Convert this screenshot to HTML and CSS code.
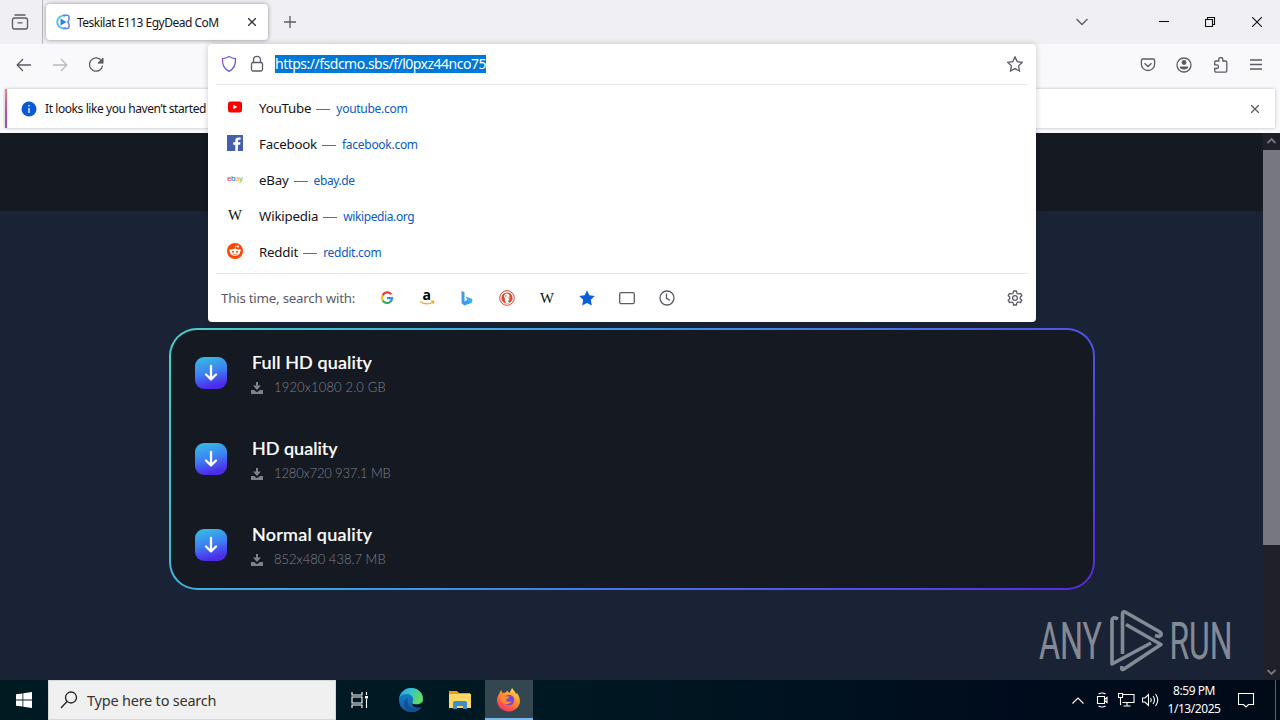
FILE: index.html
```html
<!DOCTYPE html>
<html lang="en">
<head>
<meta charset="utf-8">
<title>Teskilat E113 EgyDead CoM</title>
<link rel="stylesheet" href="styles.css">
</head>
<body>
<svg class="defs" aria-hidden="true">
  <defs>
    <linearGradient id="tile" x1="0" y1="0" x2=".25" y2="1"><stop offset="0" stop-color="#35c2dd"/><stop offset=".55" stop-color="#3d80f5"/><stop offset="1" stop-color="#4c2bea"/></linearGradient>
    <linearGradient id="shieldg" x1="0" y1="0" x2="1" y2="1"><stop offset="0" stop-color="#9059d8"/><stop offset="1" stop-color="#4a5bc8"/></linearGradient>
    <symbol id="tray" viewBox="0 0 12 12"><path d="M5 0h2v3.500h3L6 8 2 3.500h3zM0 8h3L6 10.200 9 8h3v4H0z" fill="#80828a"/></symbol>
    <symbol id="tileicon" viewBox="0 0 32 32"><rect width="32" height="32" rx="9" fill="url(#tile)"/><path d="M16 9v13M11 17.500l5 4.800 5-4.800" fill="none" stroke="#fff" stroke-width="2.300" stroke-linecap="round" stroke-linejoin="round"/></symbol>
  </defs>
</svg>
<div class="desktop">
  <header class="tabbar">
    <div class="tabview"><svg width="18" height="18" viewBox="0 0 18 18" class="line"><path d="M3.500 2h11M1.500 7q0-2 2-2h11q2 0 2 2v7q0 2-2 2h-11q-2 0-2-2zM6.500 9.800h5"/></svg></div>
    <div class="tab">
      <svg width="16" height="16" viewBox="0 0 16 16"><path d="M10.500 2A6.300 6.300 0 1 0 11 13.800" fill="none" stroke="#55bde9" stroke-width="1.900"/><path d="M8 1.300h4q2 0 2 2v2q0 1.500-1.300 2.700Q14 9.200 14 10.500v2q0 2-2 2H8" fill="none" stroke="#6482df" stroke-width="1.500"/><path d="M5.500 4.500l6 3.500-6 3.500z" fill="#317fe8"/></svg>
      <span class="tabtitle">Teskilat E113 EgyDead CoM</span>
      <svg class="tabclose line" width="8" height="8" viewBox="0 0 8 8"><path d="M0 0l8 8M8 0L0 8"/></svg>
    </div>
    <svg class="newtab line" width="12" height="12" viewBox="0 0 12 12"><path d="M6 0v12M0 6h12"/></svg>
    <div class="winctl">
      <svg width="12" height="8" viewBox="0 0 12 8" class="line chev"><path d="M.5 1L6 6.500 11.500 1"/></svg>
      <svg width="10" height="10" viewBox="0 0 10 10" class="win"><path d="M0 4.500h10"/></svg>
      <svg width="11" height="11" viewBox="0 0 11 11" class="win"><path d="M.5 2.500h7v7h-7zM2.500 2.500v-2h7v7h-2"/></svg>
      <svg width="10" height="10" viewBox="0 0 10 10" class="win"><path d="M0 0l10 10M10 0L0 10"/></svg>
    </div>
  </header>

  <nav class="toolbar">
    <svg class="line" width="16" height="16" viewBox="0 0 16 16"><path d="M15 8H1.500M7 2L1.200 8 7 14"/></svg>
    <svg class="line faded" width="16" height="16" viewBox="0 0 16 16"><path d="M1 8h13.500M9 2l5.800 6L9 14"/></svg>
    <svg class="line" width="16" height="16" viewBox="0 0 16 16"><path d="M13.500 3.800A6.600 6.600 0 1 0 14.600 8.500M14.800 1v4.800H10"/><path d="M14.500 2v3.500H11z" fill="#5b5b66"/></svg>
    <div class="tools">
      <svg class="line" width="16" height="16" viewBox="0 0 16 16"><path d="M1.400 3.500q0-1.500 1.500-1.500h10.200q1.500 0 1.500 1.500v3.700a6.600 6.300 0 0 1-13.200 0zM4.500 6.300L8 9.500l3.500-3.200"/></svg>
      <svg class="line" width="16" height="16" viewBox="0 0 16 16"><circle cx="8" cy="8" r="7"/><circle cx="8" cy="5.500" r="2.400" fill="#5b5b66" stroke="none"/><path d="M3.800 9.500h8.400q0 3-4.200 3t-4.200-3z" fill="#5b5b66" stroke="none"/></svg>
      <svg class="line" width="16" height="16" viewBox="0 0 16 16"><path d="M5.800 4V2.500a2 2 0 0 1 4 0V4H12.500q1.300 0 1.300 1.300v8.500q0 1.300-1.300 1.300H3q-1.300 0-1.300-1.300V11.500h2a1.800 1.800 0 0 0 0-3.600H1.700V5.300Q1.700 4 3 4z"/></svg>
      <svg class="line" width="14" height="16" viewBox="0 0 14 16"><path d="M1 3h12M1 7.500h12M1 12h12"/></svg>
    </div>
  </nav>

  <div class="noticewrap">
    <div class="notice">
      <svg width="16" height="16" viewBox="0 0 16 16"><circle cx="8" cy="8" r="7.500" fill="#0a5ad6"/><path d="M8 7v5M8 4v1.500" stroke="#fff" stroke-width="1.300"/></svg>
      <span class="noticetext">It looks like you haven’t started</span>
      <svg class="noticeclose line" width="8" height="8" viewBox="0 0 8 8"><path d="M0 0l8 8M8 0L0 8"/></svg>
    </div>
  </div>

  <main class="viewport">
    <div class="site">
      <div class="sitehead"></div>
      <section class="card">
        <div class="item"><svg class="tileicon"><use href="#tileicon"/></svg><div><h2 class="q1">Full HD quality</h2><p><svg class="tray"><use href="#tray"/></svg><span class="s1">1920x1080 2.0 GB</span></p></div></div>
        <div class="item"><svg class="tileicon"><use href="#tileicon"/></svg><div><h2 class="q2">HD quality</h2><p><svg class="tray"><use href="#tray"/></svg><span class="s2">1280x720 937.1 MB</span></p></div></div>
        <div class="item"><svg class="tileicon"><use href="#tileicon"/></svg><div><h2 class="q3">Normal quality</h2><p><svg class="tray"><use href="#tray"/></svg><span class="s3">852x480 438.7 MB</span></p></div></div>
      </section>
    </div>
    <div class="scroll">
      <svg width="9" height="6" viewBox="0 0 9 6"><path d="M.5 5l4-4 4 4"/></svg>
      <div class="thumb"></div>
      <svg width="9" height="6" viewBox="0 0 9 6"><path d="M.5 1l4 4 4-4"/></svg>
    </div>
  </main>

  <footer class="taskbar">
    <div class="start"><svg width="16" height="16" viewBox="0 0 16 16"><path d="M0 2.300L6.500 1.400V7.500H0zM7.300 1.200L16 0v7.500H7.300zM0 8.400h6.500v6.200L0 13.700zM7.300 8.400H16V16l-8.700-1.200z" fill="#fff"/></svg></div>
    <div class="search">
      <svg width="18" height="18" viewBox="0 0 18 18"><circle cx="11" cy="6.500" r="5.500"/><path d="M7 10.500L1 17"/></svg>
      <span class="searchtext">Type here to search</span>
    </div>
    <div class="app"><svg width="18" height="16" viewBox="0 0 18 16" fill="none" stroke="#fff" stroke-width="1.100"><path d="M1 0v3h10V0M1 16v-3h10v3M1 5h10v6H1zM15.500 0v3M15.500 7v9"/><path d="M14 4h3v2.500h-3z" fill="#fff" stroke="none"/></svg></div>
    <div class="app edge"><svg width="26" height="26" viewBox="0 0 26 26">
      <defs><linearGradient id="e1" x1="0" y1="0" x2="1" y2=".35"><stop offset="0" stop-color="#249fd5"/><stop offset=".5" stop-color="#35c4c8"/><stop offset="1" stop-color="#63da62"/></linearGradient><linearGradient id="e2" x1="0" y1="0" x2="0" y2="1"><stop offset="0" stop-color="#1688ce"/><stop offset="1" stop-color="#1059a8"/></linearGradient></defs>
      <circle cx="13" cy="13" r="12" fill="url(#e2)"/><path d="M1.200 11C3 4 8 1 13 1c7 0 12 5 12 10.500 0 4-3 6-6.500 6-3 0-4.700-1-4.300-2 .7-1 1-1.700 1-2.800C15.200 9 12 7 8.500 7 5 7 2.500 8.500 1.200 11z" fill="url(#e1)"/><path d="M10 11c-2 5 1 10 7 10.500 3 .2 5-.8 7-2-2 4-6 5.700-10 5.500C7 24.500 5 18 6.500 14.500 7.500 12.500 9 11.500 10 11z" fill="#174e91"/><path d="M14.200 15.500c-.4 1 1.300 2 4.300 2 2.500 0 4.700-1 5.800-2.500l1.700 3-2.500 2c-4.500 1.500-9.800.5-9.300-4.500z" fill="#001820"/></svg></div>
    <div class="app"><svg width="22" height="20" viewBox="0 0 22 20"><path d="M0 1h8l2 2h11v4H0z" fill="#e9a018"/><path d="M0 4h22v14H0z" fill="#ffd866"/><path d="M4 19v-6q0-2 2-2h10q2 0 2 2v6h-4v-3H8v3z" fill="#3b90c8"/></svg></div>
    <div class="app active"><svg width="24" height="25" viewBox="0 0 24 25">
      <defs><linearGradient id="f1" x1=".8" y1="0" x2=".2" y2="1"><stop offset="0" stop-color="#ffe64a"/><stop offset=".45" stop-color="#ff8b2a"/><stop offset="1" stop-color="#f52b62"/></linearGradient></defs>
      <path d="M2 7l2-4 1.500 3L9 5.500l1-2L12.500 6 15 1c1 2 3 3 4 6l1-1c3 4 4 9 1.500 13S15 24.500 12 24.500C5 24.500 0 19.500 0 13c0-2 .8-4 2-6z" fill="url(#f1)"/><circle cx="12" cy="13" r="5.300" fill="#7b48dc"/><path d="M3 8.500c3-1.500 5-.5 6 .8l3.500.2c-.5 2-3 2-3.500 3 0 2.500 3 3 5.500 1.500-1 3.500-6 4-8.500 1.500C4.500 14 4 12 3 8.500z" fill="#ff8a2c"/></svg></div>
    <div class="systray">
      <svg class="up" width="12" height="7" viewBox="0 0 12 7"><path d="M.5 6.500L6 1l5.500 5.500"/></svg>
      <svg class="cam" width="14" height="16" viewBox="0 0 14 16"><path d="M2.500 4.500h7v7h-7zM9.500 7.500l2.500-2v5l-2.500-2M3.500 2q3.500-2 7 0M3.500 14q3.500 2 7 0"/></svg>
      <svg class="net" width="17" height="14" viewBox="0 0 17 14"><path d="M5 1.500h11v8H4.500M9 9.500V13M5.500 13h7M.5.500h4v4h-4zM2.500 4.500V12"/></svg>
      <svg class="vol" width="17" height="14" viewBox="0 0 17 14"><path d="M.5 5h2.500L6.500 1.500v11L3 9H.5zM8.500 5q1.500 2 0 4M11 3q3 4 0 8M13.500 1q4.500 6 0 12"/></svg>
      <div class="clock"><span class="time">8:59 PM</span><span class="date">1/13/2025</span></div>
      <svg class="action" width="17" height="17" viewBox="0 0 17 17"><path d="M.5 1.500h15v11h-5L8 15l-2.500-2.500h-5z"/></svg>
      <i class="peek"></i>
    </div>
  </footer>

  <div class="urlpanel">
    <div class="urlrow">
      <svg width="16" height="18" viewBox="0 0 16 18"><path d="M8 1.500c2 1.300 4 2 6.500 2.200.3 5-1 9.800-6.500 12.600C2.500 13.500 1.200 8.700 1.500 3.700 4 3.500 6 2.800 8 1.500z" fill="none" stroke="url(#shieldg)" stroke-width="1.300"/></svg>
      <svg class="line" width="14" height="18" viewBox="0 0 14 18"><rect x="1.500" y="7.500" width="11" height="8.500" rx="1.500"/><path d="M3.500 7.500V4.800a3.500 3.500 0 0 1 7 0v2.700"/></svg>
      <span class="url">https://fsdcmo.sbs/f/l0pxz44nco75</span>
      <svg class="line fav" width="16" height="16" viewBox="0 0 16 16"><path d="M8 .9l2.200 4.700 5 .7-3.600 3.600.9 5.100L8 12.600 3.500 15l.9-5.100L.8 6.300l5-.7z"/></svg>
    </div>
    <ul class="suggest">
      <li><svg width="16" height="16" viewBox="0 0 16 16"><rect x="1" y="2.500" width="14" height="11" rx="2.500" fill="#f00"/><path d="M6.300 5.700l4 2.300-4 2.300z" fill="#fff"/></svg><b>YouTube</b><i></i><span>youtube.com</span></li>
      <li><svg width="16" height="16" viewBox="0 0 16 16"><path d="M0 0h16v16H0z" fill="#4460a8"/><path d="M8.300 16V9.800H6.200V7.300h2.100V5.600q0-3.100 3-3.100h2.300v2.300h-1.500q-1.200 0-1.200 1.200v1.300h2.600l-.4 2.500h-2.200V16z" fill="#fff"/></svg><b>Facebook</b><i></i><span>facebook.com</span></li>
      <li><svg width="16" height="16" viewBox="0 0 16 16" class="ebay"><text x="0" y="10" textLength="16"><tspan fill="#e53238">e</tspan><tspan fill="#2d62bd">b</tspan><tspan fill="#e9ae18">a</tspan><tspan fill="#86b817">y</tspan></text></svg><b>eBay</b><i></i><span class="tight">ebay.de</span></li>
      <li><svg width="16" height="16" viewBox="0 0 16 16" class="wiki"><text x="1" y="13" textLength="14" lengthAdjust="spacingAndGlyphs">W</text></svg><b>Wikipedia</b><i></i><span class="tight">wikipedia.org</span></li>
      <li><svg width="16" height="16" viewBox="0 0 16 16"><circle cx="8" cy="8" r="8" fill="#ff4500"/><ellipse cx="8" cy="9.300" rx="5" ry="3.600" fill="#fff"/><circle cx="3.500" cy="7.500" r="1.300" fill="#fff"/><circle cx="12.500" cy="7.500" r="1.300" fill="#fff"/><circle cx="11" cy="3.500" r="1.100" fill="#fff"/><path d="M8 6l.6-3 2.400.5" fill="none" stroke="#fff" stroke-width=".7"/><circle cx="6" cy="8.800" r="1" fill="#ff4500"/><circle cx="10" cy="8.800" r="1" fill="#ff4500"/><path d="M6 11q2 1.200 4 0" fill="none" stroke="#ff4500" stroke-width=".7"/></svg><b>Reddit</b><i></i><span>reddit.com</span></li>
    </ul>
    <div class="engines">
      <span class="enginelabel">This time, search with:</span>
      <div class="enginelist">
        <svg width="16" height="16" viewBox="0 0 16 16" fill="none" stroke-width="2.200"><path d="M12.200 4.200A5 5 0 0 0 3.700 5.500" stroke="#ea4335"/><path d="M3.700 5.500a5 5 0 0 0 0 5" stroke="#fbbc05"/><path d="M3.700 10.500a5 5 0 0 0 7.600 1.300" stroke="#34a853"/><path d="M11.300 11.800A5 5 0 0 0 13 8.200H8" stroke="#4285f4"/></svg>
        <svg width="16" height="16" viewBox="0 0 16 16" class="amazon"><text x="3.500" y="10">a</text><path d="M1 11.500q6.500 4.500 13 .7M12.200 11.200l2.700.2-1 2.300" fill="none" stroke="#f7a52b" stroke-width="1.200"/></svg>
        <svg width="16" height="16" viewBox="0 0 16 16"><path d="M2.500 1l3 1v9.500l3-1.700-1.700-3L13 9q1 3-1.500 4.300L5.500 15.500l-3-2.300z" fill="#3e9bf1"/><path d="M6.800 6.800L13 9q1 3-1.500 4.300l-2.500-3z" fill="#31b8eb"/></svg>
        <svg width="16" height="16" viewBox="0 0 16 16"><circle cx="8" cy="8" r="7.300" fill="#fff" stroke="#e0432f"/><circle cx="8" cy="8" r="5.600" fill="#e2492f"/><path d="M6 4q3-1.500 4.500 1.500L10 13l-3 .5L5 6z" fill="#fff"/><path d="M8 7l4 .5-3 1.300z" fill="#f9bd25"/><path d="M8.500 10l2.500 1-1.500 1.500z" fill="#5eab42"/><circle cx="7" cy="6" r=".7" fill="#345d94"/></svg>
        <svg width="16" height="16" viewBox="0 0 16 16" class="wiki"><text x="1" y="13" textLength="14" lengthAdjust="spacingAndGlyphs">W</text></svg>
        <svg width="16" height="16" viewBox="0 0 16 16"><path d="M8 .2l2.300 5 5.500.8-4 3.800 1 5.800L8 13l-4.800 2.600 1-5.800L.2 6l5.500-.8z" fill="#0560df"/></svg>
        <svg class="line" width="16" height="16" viewBox="0 0 16 16"><rect x=".7" y="2.700" width="14.600" height="11" rx="1.500"/></svg>
        <svg class="line" width="16" height="16" viewBox="0 0 16 16"><circle cx="8" cy="8" r="7"/><path d="M7.500 3.500v4.800l3.500 2"/></svg>
      </div>
      <svg class="line gear" width="16" height="16" viewBox="0 0 16 16"><circle cx="8" cy="8" r="2.400"/><path d="M6.600 1h2.800l.5 2.200 1.300.8 2.200-.7 1.400 2.400L13.200 7.200v1.600l1.600 1.500-1.400 2.400-2.200-.7-1.300.8-.5 2.200H6.600l-.5-2.200-1.300-.8-2.200.7-1.400-2.400 1.600-1.500V7.200L1.200 5.700l1.400-2.400 2.200.7 1.300-.8z" stroke-linejoin="round"/></svg>
    </div>
  </div>

  <svg class="watermark" width="194" height="64" viewBox="0 0 194 64">
    <text transform="translate(1 50) scale(1 1.730)" textLength="63" lengthAdjust="spacingAndGlyphs">ANY</text>
    <text transform="translate(131.500 50) scale(1 1.730)" textLength="63" lengthAdjust="spacingAndGlyphs">RUN</text>
    <g fill="none" stroke-width="3.600" stroke-linejoin="round" stroke-linecap="butt"><path d="M80 10q-6-3-6 2v43l39-21"/><path d="M84.500 45V5q0-3.500 3.500-1.500l34 19.500q3 3-1 4.500l-4-1"/><path d="M88 15.500l35 20-37 24.500q-3 2-2-3"/></g>
  </svg>
</div>
</body>
</html>
```
FILE: styles.css
```css
* { box-sizing: border-box; }
body { margin: 0; font-family: "Noto Sans", "Open Sans", sans-serif; overflow: hidden; }
h2, p, ul { margin: 0; padding: 0; }
svg { display: block; flex: none; }
span, b, h2 { white-space: nowrap; }
.defs { position: absolute; width: 0; height: 0; }
.desktop { position: relative; width: 1280px; height: 720px; display: flex; flex-direction: column; overflow: hidden; background: #f9f9fb; }
.line { fill: none; stroke: #5b5b66; stroke-width: 1.3; }
.faded { opacity: .4; }

.tabbar { height: 44px; display: flex; align-items: center; background: #f0f0f4; flex: none; }
.tabview { width: 43px; height: 44px; padding: 13px 0 0 11px; border-right: 1px solid #b8b8bf; }
.tab { width: 222px; height: 36px; margin-left: 3px; padding: 0 12px 0 9px; display: flex; align-items: center; background: #fff; border-radius: 4px; box-shadow: 0 0 4px rgba(0,0,0,.4); }
.tabtitle { margin-left: 6px; padding-top: 1px; font-size: 12px; color: #15141a; letter-spacing: -.5px; }
.tabclose { margin-left: auto; stroke: #333; }
.newtab { margin-left: 16px; }
.winctl { margin-left: auto; padding-right: 18px; display: flex; align-items: center; gap: 36px; }
.chev { margin: 0 35px 0 0; }
.win { fill: none; stroke: #111; stroke-width: 1.1; }

.toolbar { height: 42px; padding: 0 17px 0 16px; display: flex; align-items: center; gap: 20px; flex: none; }
.tools { margin-left: auto; display: flex; gap: 20.5px; }
.noticewrap { height: 47px; padding: 3px 5px 5px 5px; flex: none; }
.notice { height: 39px; display: flex; align-items: center; padding: 0 16px 0 14px; background: #fff; border-left: 2px solid #c45b9e; border-image: linear-gradient(#ef8d62, #c4509e, #8b51c8) 1; box-shadow: 0 0 3px rgba(0,0,0,.25); }
.noticetext { margin-left: 8px; font-size: 12px; color: #15141a; letter-spacing: -.42px; }
.noticeclose { margin-left: auto; }

.viewport { flex: 1; display: flex; min-height: 0; }
.site { flex: 1; background: #1a2335; }
.sitehead { height: 78px; background: #151922; }
.card { width: 926px; height: 262px; margin: 117px 0 0 169px; padding: 22px 24px; border: 2px solid transparent; border-radius: 28px; background: linear-gradient(#151922, #151922) padding-box, linear-gradient(135deg, #49cfc4, #3da2e8 35%, #4a6be8 65%, #5729e0) border-box; }
.item { height: 86px; display: flex; align-items: flex-start; gap: 25px; }
.tileicon { width: 32px; height: 32px; margin-top: 5px; }
.item h2 { height: 24px; font: 500 18px/20px "Lato", "Open Sans", sans-serif; color: #fff; -webkit-text-stroke: .2px #fff; letter-spacing: .1px; }
.item h2.q2 { letter-spacing: 0; }
.item h2.q3 { letter-spacing: .25px; }
.item p { display: flex; align-items: center; gap: 11px; height: 23px; color: #80828a; }
.item p span { font: 300 13px/21px "Lato", sans-serif; }
.item p .s1 { letter-spacing: .15px; }
.item p .s2 { letter-spacing: -.15px; }
.tray { width: 12px; height: 12px; margin: 0 0 0 -1px; }
.scroll { width: 17px; display: flex; flex-direction: column; align-items: center; justify-content: space-between; padding: 5px 0; background: #20202a; }
.scroll path { fill: none; stroke: #777780; stroke-width: 1.8; }
.thumb { width: 17px; height: 395px; margin-bottom: 118px; background: #777780; }

.taskbar { height: 40px; flex: none; display: flex; background: linear-gradient(90deg, #001a22 0, #001822 45%, #000c1d 80%, #020a18); }
.start { width: 48px; display: flex; align-items: center; justify-content: center; }
.search { width: 288px; display: flex; align-items: center; padding-left: 11px; background: #f0f0f0; border: 1px solid #d8d8d8; }
.search circle, .search path { fill: none; stroke: #222; stroke-width: 1.3; }
.searchtext { margin-left: 9px; font-size: 14.5px; color: #333; letter-spacing: -.22px; }
.app { width: 48px; margin-right: 2px; display: flex; align-items: center; justify-content: center; }
.app.edge { padding-left: 2px; }
.app.active { background: #344650; border-bottom: 2px solid #76b9ed; margin-left: -1px; }
.systray { margin-left: auto; display: flex; align-items: center; color: #fff; }
.systray svg { fill: none; stroke: #fff; stroke-width: 1.1; }
.up { margin-right: 11px; }
.cam { margin-right: 8.5px; }
.net { margin-right: 7px; }
.vol { margin-right: 5.5px; }
.clock { width: 60px; display: flex; flex-direction: column; align-items: center; font-size: 12px; line-height: 18px; letter-spacing: -.45px; }
.action { margin: 0 20px 0 14px; }
.peek { width: 5px; height: 40px; border-left: 1px solid #59616d; }

.urlpanel { position: absolute; left: 208px; top: 44px; width: 828px; height: 278px; background: #fff; border-radius: 4px; box-shadow: 0 0 6px rgba(0,0,0,.2); display: flex; flex-direction: column; padding: 0 8px; }
.urlrow { height: 41px; padding: 0 5px; display: flex; align-items: center; border-bottom: 1px solid #e8e8ec; }
.urlrow .line { margin-left: 13px; }
.url { margin-left: 11px; background: #0078d7; color: #fff; font-size: 14px; line-height: 18px; letter-spacing: -.5px; }
.urlrow .fav { margin-left: auto; }
.suggest { list-style: none; height: 189px; padding: 5px 11px; border-bottom: 1px solid #e8e8ec; }
.suggest li { height: 36px; display: flex; align-items: center; }
.suggest svg { margin-top: -3px; }
.suggest b { margin-left: 16px; font-weight: 400; font-size: 13.3px; color: #15141a; letter-spacing: -.2px; }
.suggest i { width: 14px; height: 1px; margin: 2px 6px 0 5px; background: #6a6a72; }
.suggest span { font-size: 12px; color: #0a5bc4; letter-spacing: -.28px; }
.suggest .tight { letter-spacing: -.4px; }
.ebay text { font: 8px "Liberation Sans", sans-serif; }
.wiki text { font: 15px "Liberation Serif", serif; fill: #111; }
.amazon { overflow: visible; }
.amazon text { font: bold 14px "Open Sans", sans-serif; }
.engines { flex: 1; display: flex; align-items: center; padding: 0 5px; }
.enginelabel { font-size: 13.3px; color: #5b5b66; width: 158px; letter-spacing: -.22px; }
.enginelist { display: flex; gap: 24px; }
.gear { margin-left: auto; }

.watermark { position: absolute; left: 1038px; top: 609px; opacity: .5; overflow: visible; }
.watermark text { font: 400 30px "Roboto", sans-serif; fill: #eef1f5; }
.watermark g { stroke: #eef1f5; }
```
